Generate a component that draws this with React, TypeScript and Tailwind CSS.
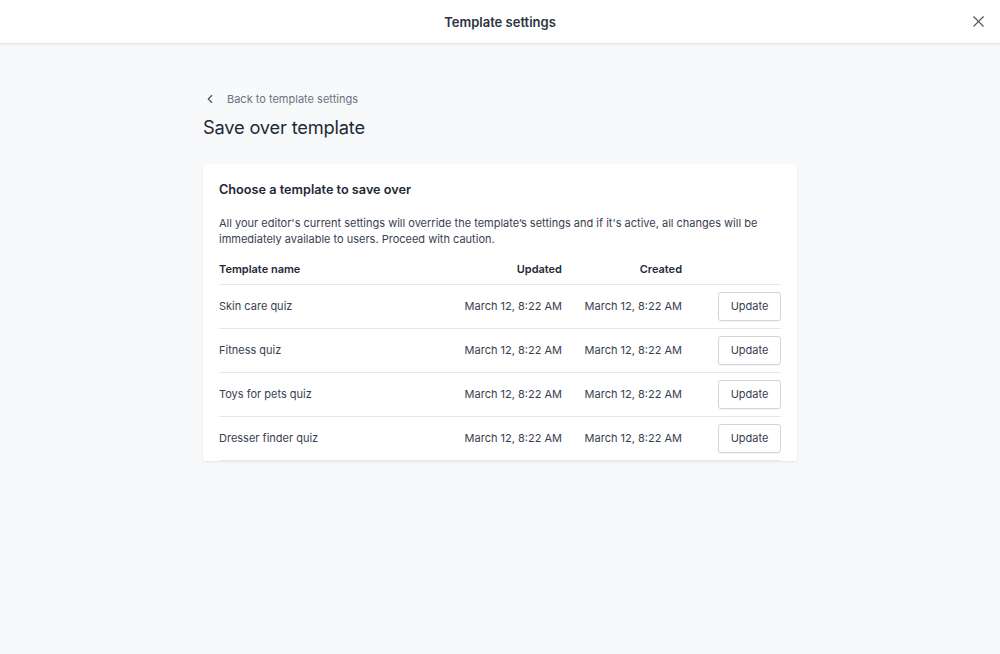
import { X, ChevronLeft } from "lucide-react";

const rows = ["Skin care quiz", "Fitness quiz", "Toys for pets quiz", "Dresser finder quiz"];

export default function App() {
  return (
    <div className="min-h-[654px] bg-[#f8f9fb] font-['Inter',sans-serif] text-[#1f2937]">
      <header className="relative flex h-[44px] items-center justify-center border-b border-[#e5e7eb] bg-white shadow-[0_1px_2px_rgba(0,0,0,0.06)]">
        <h1 className="pt-[2px] text-[13px] font-semibold text-[#2d3340]">Template settings</h1>
        <button className="absolute right-[12px] top-[12px] text-[#4b5563]">
          <X size={19} strokeWidth={1.4} />
        </button>
      </header>

      <main className="mx-auto w-[594px] pt-[47px]">
        <a className="flex items-center gap-[10px] text-[11px] text-[#6b7280]">
          <ChevronLeft size={14} strokeWidth={2} className="text-[#4b5563]" />
          Back to template settings
        </a>
        <h2 className="mt-[6px] text-[18.3px] leading-[26px] tracking-[-0.2px] text-[#1f2937]">Save over template</h2>

        <section className="mt-[24px] rounded-[3px] bg-white px-[16px] pt-[17px] shadow-[0_1px_3px_rgba(0,0,0,0.08)]">
          <h3 className="text-[12.7px] font-semibold leading-[18px] text-[#1f2937]">Choose a template to save over</h3>
          <p className="mt-[16px] text-[11px] leading-[16px] text-[#374151]">
            All your editor's current settings will override the template’s settings and if it's active, all changes will be
            immediately available to users. Proceed with caution.
          </p>

          <div className="mt-[10px]">
            <div className="grid h-[28px] grid-cols-[1fr_120px_120px_99px] items-center border-b border-[#e5e7eb] pb-[2px] text-[11px] font-semibold text-[#1f2937]">
              <span>Template name</span>
              <span className="text-right">Updated</span>
              <span className="text-right">Created</span>
              <span />
            </div>
            {rows.map((name) => (
              <div
                key={name}
                className="grid h-[44px] grid-cols-[1fr_120px_120px_99px] items-center border-b border-[#e5e7eb] text-[11px] text-[#374151]"
              >
                <span>{name}</span>
                <span className="text-right">March 12, 8:22 AM</span>
                <span className="text-right">March 12, 8:22 AM</span>
                <div className="flex justify-end">
                  <button className="h-[29px] w-[63px] rounded-[3px] border border-[#d1d5db] bg-white text-[11px] text-[#374151] shadow-[0_1px_1px_rgba(0,0,0,0.04)]">
                    Update
                  </button>
                </div>
              </div>
            ))}
          </div>
        </section>
      </main>
    </div>
  );
}
